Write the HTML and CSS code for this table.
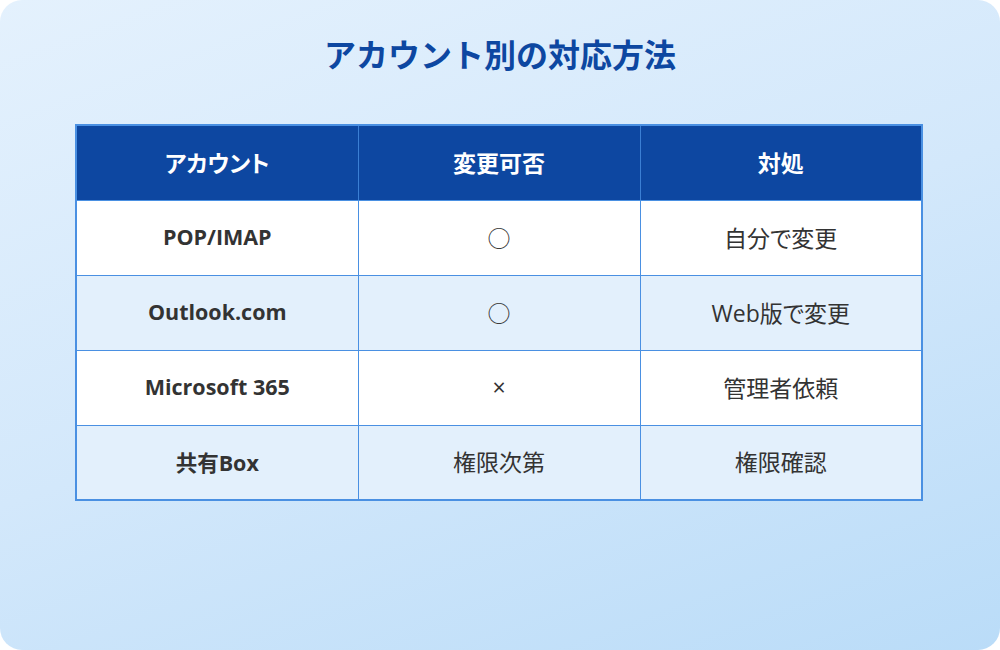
FILE: index.html
```html
<!DOCTYPE html>
<html lang="ja">
<head>
<meta charset="utf-8">
<title>アカウント別の対応方法</title>
<link rel="stylesheet" href="styles.css">
</head>
<body>
<div class="card">
  <h1 class="title">アカウント別の対応方法</h1>
  <table class="grid">
    <thead>
      <tr><th>アカウント</th><th>変更可否</th><th>対処</th></tr>
    </thead>
    <tbody>
      <tr><td class="name">POP/IMAP</td><td>○</td><td>自分で変更</td></tr>
      <tr class="alt"><td class="name">Outlook.com</td><td>○</td><td>Web版で変更</td></tr>
      <tr><td class="name">Microsoft 365</td><td>×</td><td>管理者依頼</td></tr>
      <tr class="alt"><td class="name">共有Box</td><td>権限次第</td><td>権限確認</td></tr>
    </tbody>
  </table>
</div>
</body>
</html>
```
FILE: styles.css
```css
html, body {
  margin: 0;
  padding: 0;
  background: #ffffff;
}
body {
  font-family: "Open Sans", "Noto Sans CJK JP", sans-serif;
}
.card {
  width: 1000px;
  height: 650px;
  box-sizing: border-box;
  border-radius: 22px;
  background: linear-gradient(160deg, #e4f1fd 0%, #d3e8fb 50%, #badcf8 100%);
  padding: 32px 0 0 75px;
  display: flex;
  flex-direction: column;
  align-items: flex-start;
}
.title {
  margin: 0 75px 0 0;
  align-self: center;
  font-family: "Noto Sans CJK JP", sans-serif;
  font-size: 32px;
  line-height: 42px;
  font-weight: 700;
  color: #0d47a1;
}
.grid {
  margin-top: 50px;
  width: 848px;
  border-collapse: collapse;
  table-layout: fixed;
  border: 2px solid #4a90e2;
}
.grid th, .grid td {
  height: 75px;
  padding: 0 0 2px 0;
  text-align: center;
  vertical-align: middle;
  border: 1px solid #4a90e2;
  box-sizing: border-box;
}
.grid th {
  background: #0d47a1;
  color: #ffffff;
  font-family: "Noto Sans CJK JP", sans-serif;
  font-feature-settings: "palt";
  font-size: 23px;
  font-weight: 700;
  border-top: 0;
  border-color: #0d47a1 #3b7fd4 #4a90e2 #3b7fd4;
}
.grid th:first-child { border-left-color: #0d47a1; }
.grid th:last-child { border-right-color: #0d47a1; }
.grid td {
  background: #ffffff;
  color: #333333;
  font-size: 23px;
  font-weight: 400;
  font-feature-settings: "palt";
}
.grid tr.alt td {
  background: #e3f0fc;
}
.grid td.name {
  font-size: 21.5px;
  font-weight: 700;
}
```
